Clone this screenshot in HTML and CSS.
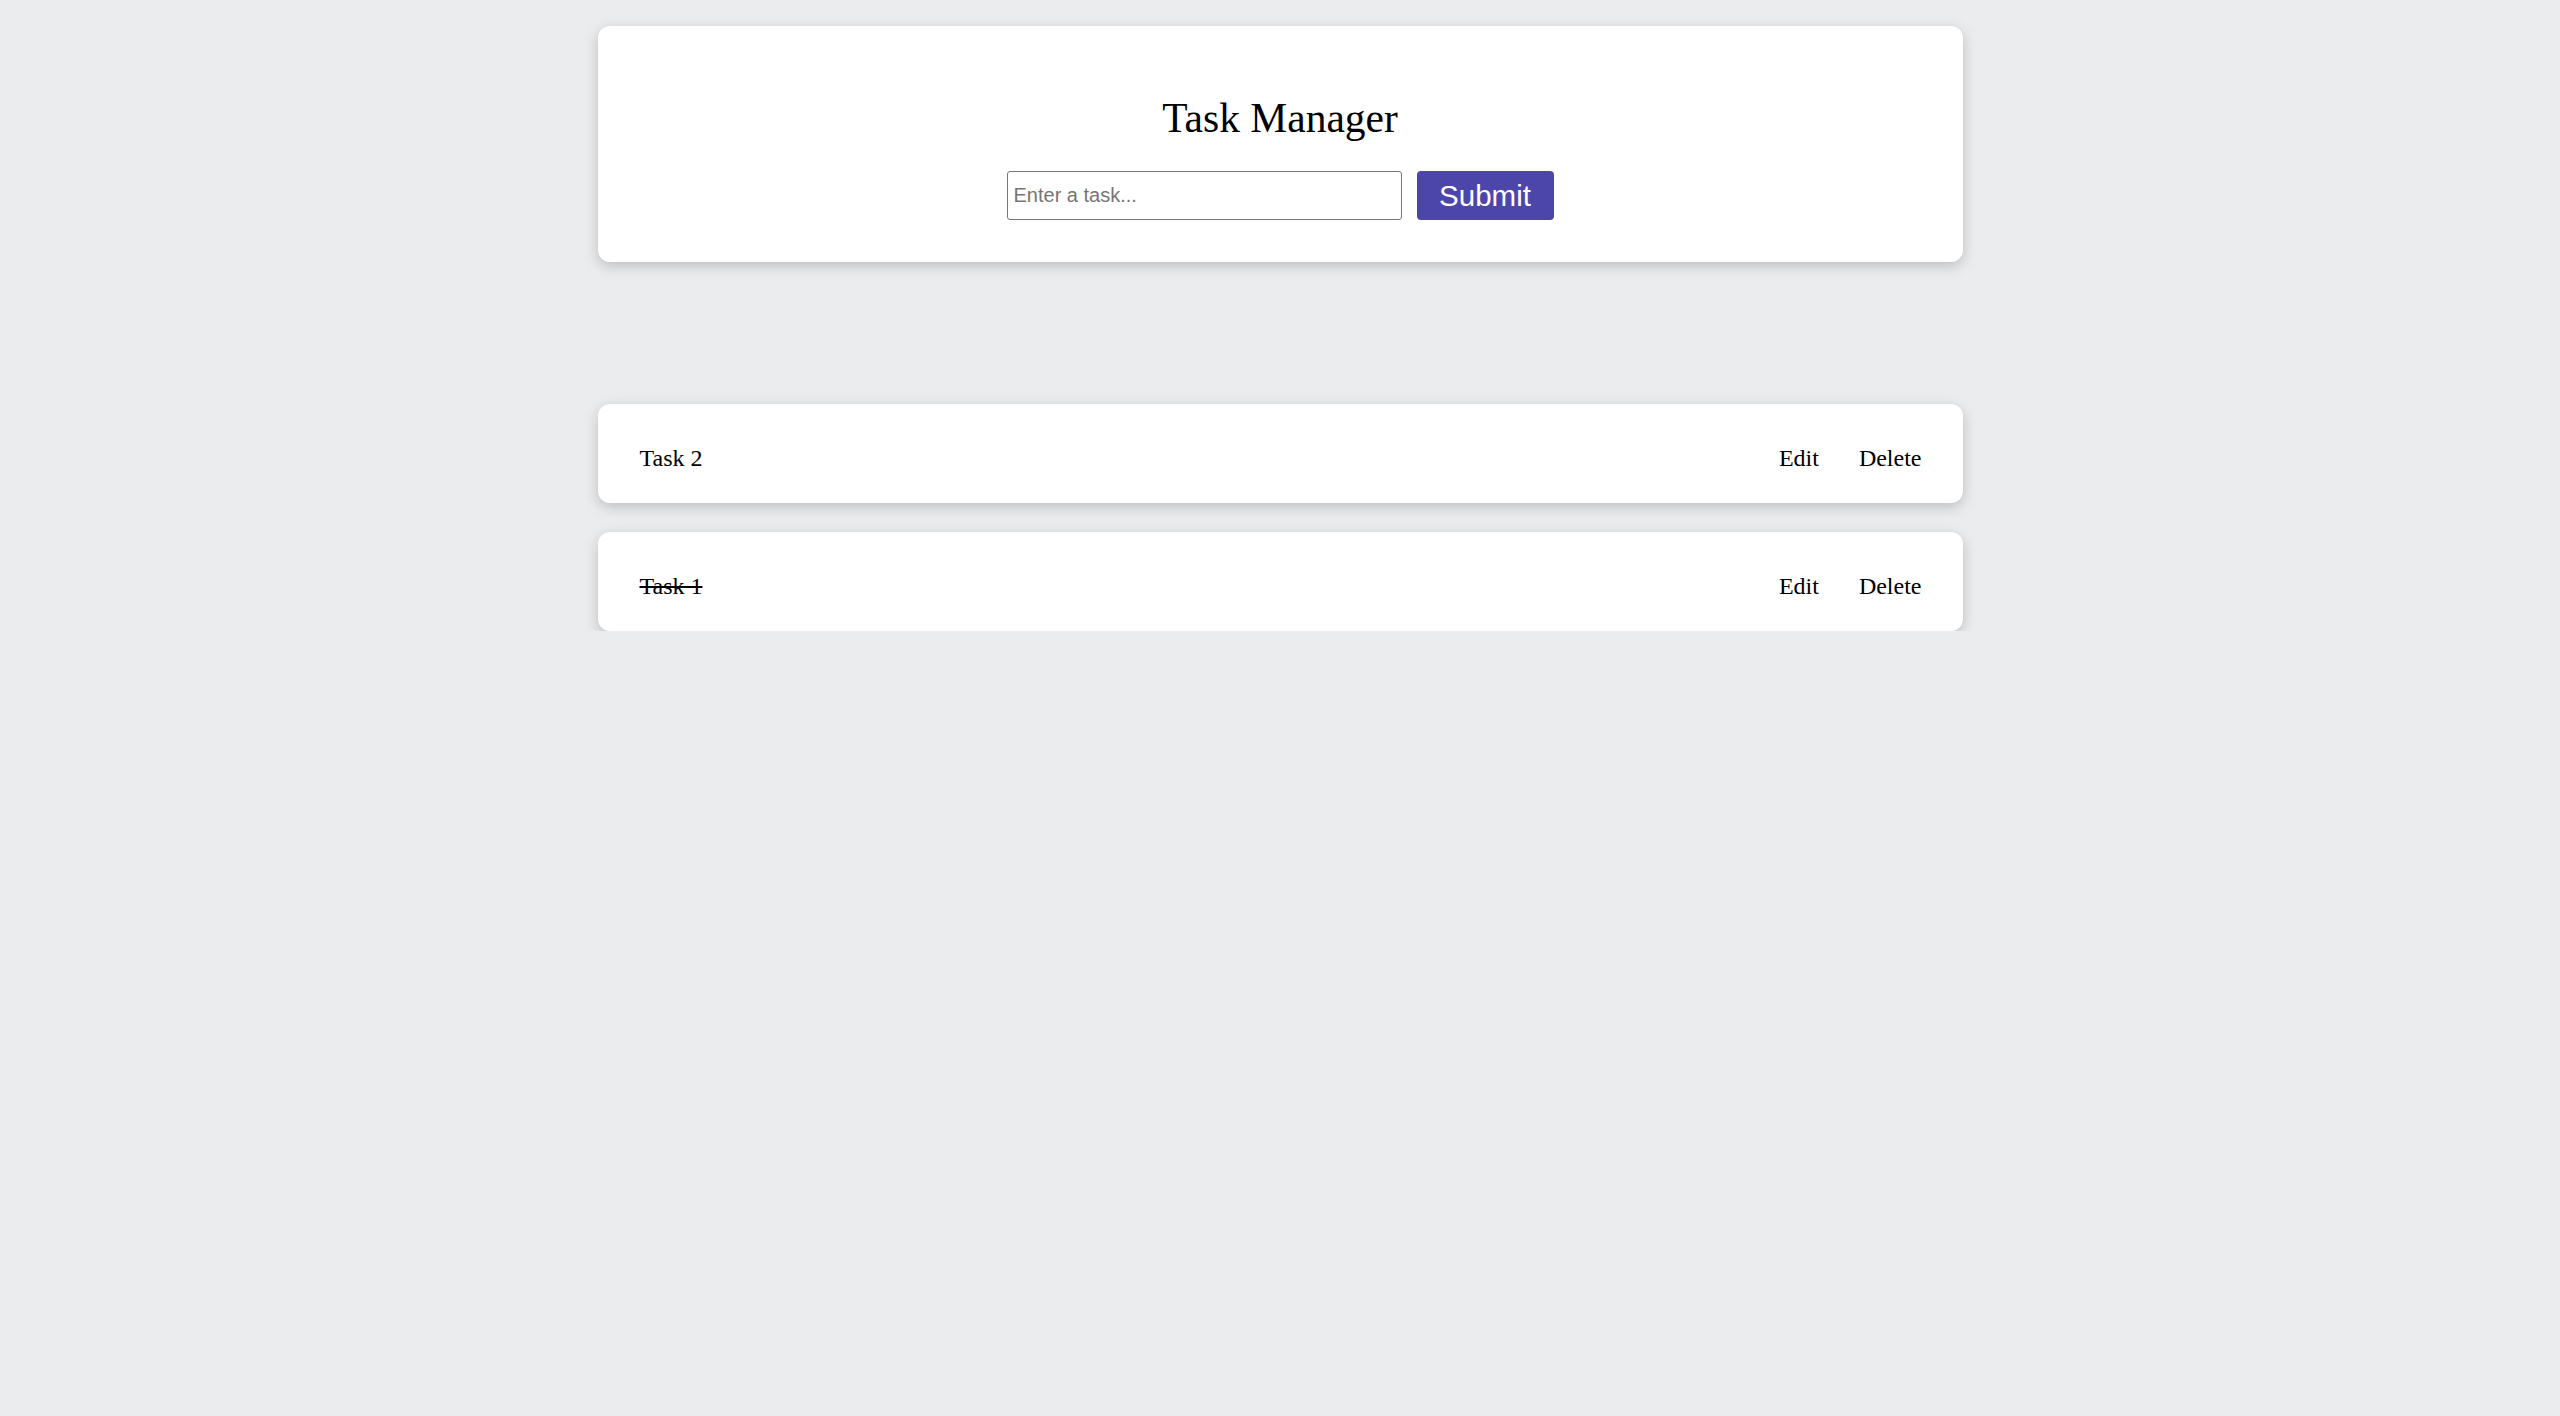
FILE: index.html
```html
<!DOCTYPE html>
<html lang="en">
<head>
<meta charset="utf-8">
<title>Task Manager</title>
<link rel="stylesheet" href="styles.css">
</head>
<body>
<main class="app">
  <section class="card header">
    <h1 class="title">Task Manager</h1>
    <form class="task-form">
      <input class="task-input" type="text" placeholder="Enter a task...">
      <button class="submit-btn" type="button">Submit</button>
    </form>
  </section>
  <ul class="task-list">
    <li class="card task">
      <span class="task-name">Task 2</span>
      <div class="task-actions">
        <button class="action-btn" type="button">Edit</button>
        <button class="action-btn" type="button">Delete</button>
      </div>
    </li>
    <li class="card task">
      <span class="task-name done">Task 1</span>
      <div class="task-actions">
        <button class="action-btn" type="button">Edit</button>
        <button class="action-btn" type="button">Delete</button>
      </div>
    </li>
  </ul>
</main>
</body>
</html>
```

FILE: styles.css
```css
html, body {
  margin: 0;
  padding: 0;
  background: #ebecee;
  font-family: "Liberation Serif", "Times New Roman", serif;
  color: #000;
}

.app {
  width: 1365px;
  margin: 0 auto;
  padding-top: 26px;
  display: flex;
  flex-direction: column;
}

.card {
  background: #ffffff;
  border-radius: 12px;
  box-shadow: 0 4px 14px rgba(0, 0, 0, 0.2);
}

.header {
  padding: 69px 0 42px;
  display: flex;
  flex-direction: column;
  align-items: center;
}

.title {
  margin: 0 0 29px;
  font-size: 41.5px;
  line-height: 47px;
  font-weight: normal;
}

.task-form {
  display: flex;
  gap: 15px;
  justify-content: center;
  margin: 0;
}

.task-input {
  box-sizing: border-box;
  width: 395px;
  height: 49px;
  border: 1px solid #767676;
  border-radius: 3px;
  padding: 0 6px;
  font-family: "Liberation Sans", Arial, sans-serif;
  font-size: 20px;
  color: #000;
  background: #fff;
  outline: none;
}

.task-input::placeholder {
  color: #757575;
}

.submit-btn {
  box-sizing: border-box;
  width: 137px;
  height: 49px;
  border: none;
  border-radius: 4px;
  background: #4c46ab;
  color: #ffffff;
  font-family: "Liberation Sans", Arial, sans-serif;
  font-size: 29.5px;
  padding: 0;
  cursor: pointer;
}

.task-list {
  list-style: none;
  margin: 142px 0 0;
  padding: 0;
  display: flex;
  flex-direction: column;
  gap: 29px;
}

.task {
  box-sizing: border-box;
  height: 99px;
  padding: 40px 41px 31px 42px;
  display: flex;
  justify-content: space-between;
  align-items: flex-start;
}

.task-name {
  font-size: 24px;
  line-height: 28px;
}

.task-name.done {
  text-decoration: line-through;
  text-decoration-thickness: 2px;
}

.task-actions {
  display: flex;
  gap: 40px;
}

.action-btn {
  background: none;
  border: none;
  padding: 0;
  font-family: "Liberation Serif", "Times New Roman", serif;
  font-size: 24px;
  line-height: 28px;
  color: #000;
  cursor: pointer;
}
```
